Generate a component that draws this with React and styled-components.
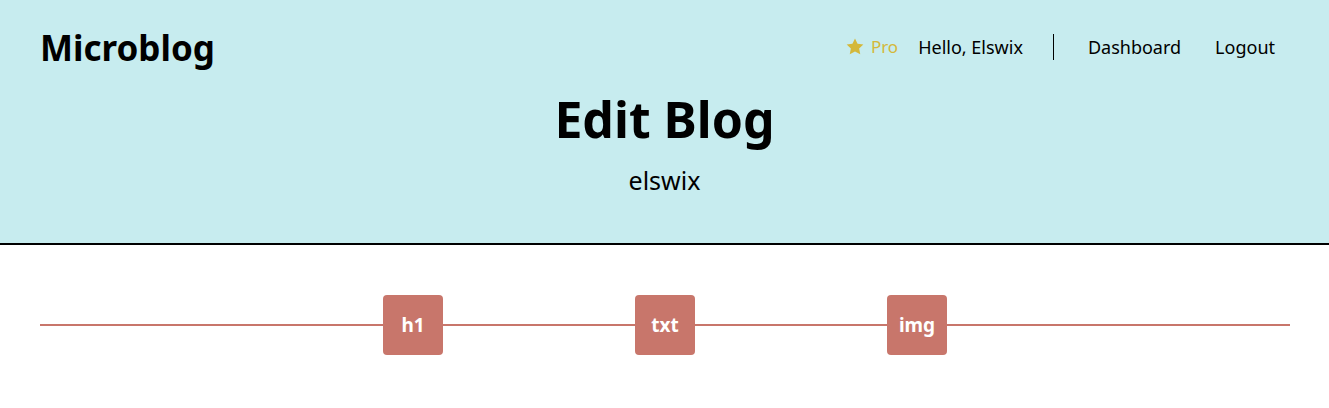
import React from 'react';
import styled, { createGlobalStyle } from 'styled-components';

const GlobalStyle = createGlobalStyle`
  body {
    margin: 0;
    font-family: "Noto Sans", "Open Sans", sans-serif;
    background: #fff;
    color: #000;
  }
`;

const Header = styled.header`
  background: #c7ecef;
  border-bottom: 2px solid #000;
  padding: 24px 40px 46px;
`;

const TopRow = styled.div`
  display: flex;
  justify-content: space-between;
  align-items: center;
`;

const Brand = styled.div`
  font-size: 35px;
  font-weight: 700;
`;

const Nav = styled.nav`
  display: flex;
  align-items: center;
  font-size: 18px;
  padding-right: 14px;
  margin-top: -2px;
`;

const ProBadge = styled.span`
  display: flex;
  align-items: center;
  gap: 7px;
  color: #d4b83a;
  font-size: 17px;
  margin-right: 20px;
`;

const Greeting = styled.span``;

const Divider = styled.span`
  width: 1px;
  height: 26px;
  background: #000;
  margin: 0 34px 0 30px;
`;

const NavLink = styled.a`
  color: #000;
  text-decoration: none;
  margin-left: ${(p) => (p.$first ? '0' : '34px')};
`;

const Title = styled.h1`
  margin: 14px 0 0;
  text-align: center;
  font-size: 50px;
  font-weight: 700;
  line-height: normal;
`;

const Subtitle = styled.div`
  margin-top: 10px;
  text-align: center;
  font-size: 25px;
`;

const Editor = styled.main`
  padding: 50px 39px 50px 40px;
`;

const Track = styled.div`
  display: flex;
  align-items: center;
`;

const Segment = styled.div`
  height: 2px;
  background: #c8766b;
  flex: ${(p) => (p.$grow ? 1 : '0 0 192px')};
`;

const Block = styled.button`
  width: 60px;
  height: 60px;
  border: none;
  border-radius: 4px;
  background: #c8766b;
  color: #fff;
  font-family: inherit;
  font-size: 19px;
  font-weight: 700;
  padding: 0;
`;

const Star = () => (
  <svg width="18" height="18" viewBox="0 0 24 24" fill="#d4b83a">
    <path d="M12 0.8l3.4 7 7.7 1-5.6 5.3 1.5 7.7L12 18l-7 3.8 1.5-7.7L.9 8.8l7.7-1z" />
  </svg>
);

export default function App() {
  return (
    <>
      <GlobalStyle />
      <Header>
        <TopRow>
          <Brand>Microblog</Brand>
          <Nav>
            <ProBadge>
              <Star />
              Pro
            </ProBadge>
            <Greeting>Hello, Elswix</Greeting>
            <Divider />
            <NavLink $first href="#">Dashboard</NavLink>
            <NavLink href="#">Logout</NavLink>
          </Nav>
        </TopRow>
        <Title>Edit Blog</Title>
        <Subtitle>elswix</Subtitle>
      </Header>
      <Editor>
        <Track>
          <Segment $grow />
          <Block>h1</Block>
          <Segment />
          <Block>txt</Block>
          <Segment />
          <Block>img</Block>
          <Segment $grow />
        </Track>
      </Editor>
    </>
  );
}
